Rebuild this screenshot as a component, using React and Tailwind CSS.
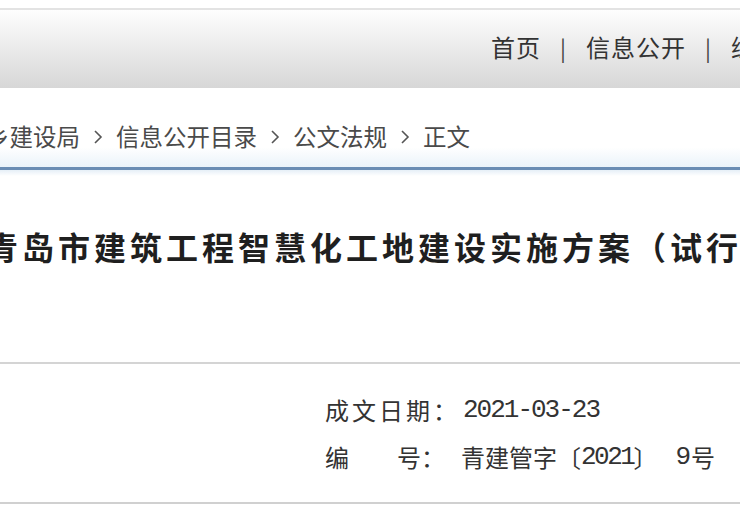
import React from "react";

const cjk = { fontFamily: '"Noto Sans CJK SC", "Noto Sans", sans-serif' };
const mono = { fontFamily: '"Liberation Mono", "Noto Sans CJK SC", monospace' };

function Chevron() {
  return (
    <svg width="10" height="16" viewBox="0 0 10 16" className="mx-[13px] shrink-0">
      <polyline points="2,2 8,8 2,14" fill="none" stroke="#555" strokeWidth="1.6" />
    </svg>
  );
}

export default function App() {
  return (
    <div className="w-[740px] h-[520px] overflow-hidden bg-white" style={cjk}>
      {/* top spacer */}
      <div className="h-[8px] bg-white" />
      {/* nav bar */}
      <div className="h-[80px] border-t-2 border-[#e3e3e3] bg-gradient-to-b from-[#fefefe] to-[#d7d7d7] flex items-center pl-[491px] pb-[4px] overflow-hidden whitespace-nowrap">
        <div className="flex items-center text-[24px] tracking-[1px] text-[#333] leading-none">
          <span>首页</span>
          <span className="mx-[19px] text-[#444] text-[22px]">|</span>
          <span>信息公开</span>
          <span className="mx-[19px] text-[#444] text-[22px]">|</span>
          <span>综合</span>
        </div>
      </div>
      {/* breadcrumb */}
      <div className="h-[79px] pt-[37px] bg-gradient-to-b from-white from-75% to-[#eaf3fa]">
        <div className="flex items-center ml-[-14px] text-[23.5px] leading-none text-[#4a4a4a] whitespace-nowrap">
          <span>乡建设局</span>
          <Chevron />
          <span>信息公开目录</span>
          <Chevron />
          <span>公文法规</span>
          <Chevron />
          <span>正文</span>
        </div>
      </div>
      <div className="h-[3px] bg-[#6a8db4]" />
      <div className="h-[6px] bg-gradient-to-b from-[#e6eff7] to-white" />
      {/* title */}
      <div className="h-[186px] pt-[54px]">
        <div className="ml-[-14px] whitespace-nowrap text-[32px] leading-none font-bold text-[#1f1f1f] tracking-[4px]">
          青岛市建筑工程智慧化工地建设实施方案（试行）
        </div>
      </div>
      <div className="h-[2px] bg-[#d4d4d4]" />
      {/* meta */}
      <div className="h-[138px] pl-[325px] pt-[33px] text-[#333] text-[24px] leading-none whitespace-nowrap">
        <div className="flex items-center">
          <span className="tracking-[3px]">成文日期</span>
          <span>：</span>
          <span className="ml-[6px] text-[26px] tracking-[-2px]" style={mono}>2021-03-23</span>
        </div>
        <div className="flex items-center mt-[21px]">
          <span>编</span>
          <span className="ml-[48px]">号</span>
          <span>：</span>
          <span className="ml-[16px]">青建管字</span>
          <span>〔</span>
          <span className="text-[26px] tracking-[-2.5px]" style={mono}>2021</span>
          <span>〕</span>
          <span className="ml-[18px] text-[26px]" style={mono}>9</span>
          <span>号</span>
        </div>
      </div>
      <div className="h-[2px] bg-[#d0d0d0]" />
    </div>
  );
}
